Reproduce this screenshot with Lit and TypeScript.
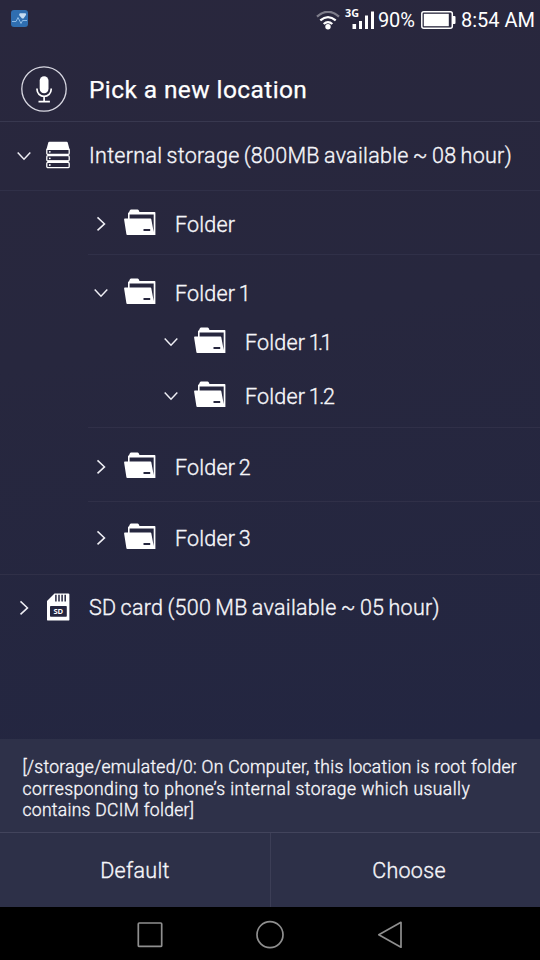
import { LitElement, html, css, svg } from "lit";
import { customElement, property } from "lit/decorators.js";

type Kind = "drive" | "folder" | "card";

const folderIcon = html`<svg width="32" height="26.500" viewBox="0 0 32 27" preserveAspectRatio="none">
  <path fill="#fff" fill-rule="evenodd" d="M4 9.700V4.400Q4 3.400 5 3.200L5.900 1.300Q6.200.5 7.100.5h6.400q.9 0 1.200.8l.8 1.800H30.600q.8 0 .8.8V26.500H3.300q-.8 0-.9-.8L.1 10.600q-.1-.9.8-.9zM5.600 5.500V9.700H26.400q.8 0 .9.7L29.700 23.500V5.500zM19.500 20.300v2.200h6.700v-2.200z"/>
</svg>`;

const driveIcon = html`<svg width="24" height="28" viewBox="0 0 24 28">
  <path fill="#fff" d="M3.300.8h17.400q.8 0 1 .8L23.700 9H.3L2.300 1.600q.2-.8 1-.8z"/>
  <g fill="none" stroke="#fff" stroke-width="1.300">
    <rect x=".8" y="8" width="22.400" height="5.400" rx="1.200"/>
    <rect x=".8" y="14.600" width="22.400" height="5.400" rx="1.200"/>
    <rect x=".8" y="21.300" width="22.400" height="5.400" rx="1.200"/>
  </g>
  <path stroke="#fff" stroke-width="1.400" d="M1.500 13.700h21M1.500 20.300h21"/>
  <g fill="#fff"><circle cx="3.800" cy="10.800" r=".9"/><circle cx="3.800" cy="17.300" r=".9"/><circle cx="3.800" cy="24" r=".9"/></g>
</svg>`;

const cardIcon = html`<svg width="24" height="28" viewBox="0 0 24 28">
  <path fill="#fff" d="M8.500.6h13.700q1.200 0 1.200 1.200v24.600q0 1.200-1.200 1.200H2.200Q1 27.600 1 26.400V8z"/>
  <path stroke="#25263f" stroke-width="1.500" d="M9.900 1.800v6.600M13 1.800v6.600M16.100 1.800v6.600M19.200 1.800v6.600"/>
  <rect x="4" y="13" width="16.800" height="10.800" rx=".8" fill="#25263f"/>
  <text x="12.300" y="21.200" text-anchor="middle" fill="#fff" font-family="Open Sans, sans-serif" font-weight="700" font-size="7.600">SD</text>
</svg>`;

const icons = { drive: driveIcon, folder: folderIcon, card: cardIcon };

@customElement("tree-row")
export class TreeRow extends LitElement {
  @property() kind: Kind = "folder";
  @property({ type: Boolean }) open = false;

  static styles = css`
    :host { display: flex; align-items: center; height: 40px; color: #f6f6fa; white-space: nowrap; }
    svg { display: block; flex: none; }
    .chev { width: 14px; }
    .icon { margin: 0 0 3px 16px; width: 51.500px; }
    .icon.root { margin: 0 0 2px 15px; width: 43px; }
    .label { font: 300 21.500px/26px Roboto, sans-serif; -webkit-text-stroke: 0.350px; letter-spacing: 0.200px; word-spacing: -2px; padding-top: 1px; }
    .label.root { letter-spacing: 0.290px; word-spacing: -1.400px; padding-top: 0; }
  `;

  render() {
    const root = this.kind === "folder" ? "" : "root";
    return html`
      <svg class="chev" width="14" height="16" viewBox="0 0 14 16" fill="none" stroke="#eeeef4" stroke-width="1.500">
        <path d=${this.open ? "M.7 4.500L7 11.200L13.300 4.500" : "M3.500 1.400L10.500 7.900L3.500 14.400"} />
      </svg>
      <span class="icon ${root}">${icons[this.kind]}</span>
      <span class="label ${root}"><slot></slot></span>
    `;
  }
}

@customElement("status-bar")
export class StatusBar extends LitElement {
  static styles = css`
    :host { display: flex; align-items: center; height: 40px; padding: 0 5px 0 11px; box-sizing: border-box; color: #fff; }
    svg { display: block; flex: none; }
    .app { margin-bottom: 3px; }
    .gap { flex: 1; }
    .wifi { margin-right: 5px; }
    .signal { margin-bottom: 3px; overflow: visible; }
    .text { font: 400 20px/24px Roboto, sans-serif; white-space: nowrap; }
    .pct { margin-left: 3px; width: 43px; letter-spacing: -0.100px; }
    .time { margin-left: 5px; }
  `;

  render() {
    const arcs = [
      { d: "M1 5.600Q12-4 23 5.600", o: 0.4 },
      { d: "M4.300 9.400Q12 2.900 19.700 9.400", o: 1 },
      { d: "M7.700 13Q12 9.300 16.300 13", o: 1 },
    ];
    return html`
      <svg class="app" width="17" height="17" viewBox="0 0 17 17">
        <rect width="17" height="17" rx="3" fill="#2f6eb0" />
        <path d="M8.800 3.300h5.500q1 0 .8 1.500L12.500 8.500H11L8 5z" fill="#c5dcf2" />
        <path d="M1 11.500h4l2-4 3 6 1.500-3H16" fill="none" stroke="#8cb9e4" />
      </svg>
      <span class="gap"></span>
      <svg class="wifi" width="24" height="19" viewBox="0 0 24 19">
        ${arcs.map((a) => svg`<path d=${a.d} fill="none" stroke="#fff" stroke-width="2.300" stroke-opacity=${a.o} />`)}
        <circle cx="12" cy="15.800" r="2.700" fill="#fff" />
      </svg>
      <svg class="signal" width="30" height="30" viewBox="0 -3 30 30">
        <text x="0" y="10" font-family="Noto Sans, sans-serif" font-weight="700" font-size="11.300" textLength="14" lengthAdjust="spacingAndGlyphs" fill="#fff">3G</text>
        <path fill="#fff" d="M7.500 17h3.600v5H7.500zM14 14h3v8h-3zM20 8.500h3V22h-3zM26 4.500h3V22h-3z" />
      </svg>
      <span class="text pct">90%</span>
      <svg width="35" height="18" viewBox="0 0 35 18">
        <rect x=".8" y=".8" width="30.500" height="16.400" rx="2" fill="none" stroke="#fff" stroke-width="1.500" />
        <rect x="2.800" y="2.800" width="25" height="12.400" fill="#fff" />
        <path d="M31.500 5h2q1 0 1 1v6q0 1-1 1h-2z" fill="#fff" />
      </svg>
      <span class="text time">8:54 AM</span>
    `;
  }
}

@customElement("app-root")
export class AppRoot extends LitElement {
  static styles = css`
    :host {
      display: flex; flex-direction: column; width: 540px; height: 960px; overflow: hidden;
      background: linear-gradient(170deg, #29273d 0%, #27273e 35%, #232641 78%);
      font-family: Roboto, sans-serif; color: #f6f6fa;
    }
    status-bar, .header, .tree, .info, .actions, .nav { flex: none; box-sizing: border-box; }
    svg { display: block; }
    .header { height: 82px; display: flex; align-items: center; padding: 16px 0 0 21px; border-bottom: 1px solid #38384f; }
    .title { font: 400 24.500px/30px Roboto, sans-serif; color: #fff; margin-left: 22px; padding-top: 2px; letter-spacing: 0.400px; -webkit-text-stroke: 0.250px; }
    .tree { height: 617px; display: flex; flex-direction: column; }
    .root { padding-left: 17px; height: 68px; }
    .root.last { height: 65px; }
    .root.first { border-bottom: 1px solid #303048; }
    .branch { margin-left: 88px; padding-left: 5.500px; border-bottom: 1px solid #303048; display: flex; flex-direction: column; box-sizing: border-box; }
    .branch.a { height: 64px; padding-top: 13px; }
    .branch.b { height: 173px; padding-top: 18px; }
    .branch.c { height: 74px; padding-top: 19px; }
    .branch.d { height: 73px; padding-top: 16px; margin-left: 0; padding-left: 93.500px; }
    .nested { padding: 9px 0 0 70px; display: flex; flex-direction: column; gap: 14px; }
    .n11 { letter-spacing: -2.600px; }
    .n12 { letter-spacing: -1.400px; }
    .info { height: 94px; padding: 18px 20px 0 22.500px; background: #2e3149; border-bottom: 1px solid #42445c; font-size: 17.500px; line-height: 21.500px; white-space: nowrap; }
    .line { display: block; font-weight: 300; -webkit-text-stroke: 0.350px; letter-spacing: 0.300px; }
    .line.wide { letter-spacing: 0.440px; }
    .actions { height: 74px; display: grid; grid-template-columns: 1fr 1fr; background: #2d3048; }
    .action { border: 0; background: none; padding: 2px 0 0; color: #f6f6fa; font: 300 21.500px/26px Roboto, sans-serif; letter-spacing: 0.300px; -webkit-text-stroke: 0.350px; }
    .action + .action { border-left: 1px solid #3c3e56; padding-left: 7px; }
    .nav { height: 53px; background: #000; display: flex; align-items: center; justify-content: center; gap: 90px; padding-top: 2px; }
  `;

  render() {
    return html`
      <status-bar></status-bar>
      <div class="header">
        <svg width="46" height="46" viewBox="0 0 46 46" fill="none" stroke="#fff">
          <circle cx="23" cy="23" r="22.200" stroke="#d8d8e2" stroke-width="1.300" />
          <rect x="18.700" y="10.200" width="8.800" height="17" rx="4.400" fill="#fff" stroke="none" />
          <path d="M16 22.500v.8a7.100 7.100 0 0 0 14.200 0v-.8M23.100 30.400v5M17.500 35.600h11.400" stroke-width="1.700" />
        </svg>
        <span class="title">Pick a new location</span>
      </div>
      <div class="tree">
        <tree-row class="root first" kind="drive" open>Internal storage (800MB available ~ 08 hour)</tree-row>
        <div class="branch a"><tree-row>Folder</tree-row></div>
        <div class="branch b">
          <tree-row open>Folder 1</tree-row>
          <div class="nested">
            <tree-row open>Folder <span class="n11">1.1</span></tree-row>
            <tree-row open>Folder <span class="n12">1.2</span></tree-row>
          </div>
        </div>
        <div class="branch c"><tree-row>Folder 2</tree-row></div>
        <div class="branch d"><tree-row>Folder 3</tree-row></div>
        <tree-row class="root last" kind="card">SD card (500 MB available ~ 05 hour)</tree-row>
      </div>
      <div class="info">
        <span class="line">[/storage/emulated/0: On Computer, this location is root folder</span>
        <span class="line wide">corresponding to phone’s internal storage which usually</span>
        <span class="line">contains DCIM folder]</span>
      </div>
      <div class="actions">
        <button class="action">Default</button>
        <button class="action">Choose</button>
      </div>
      <div class="nav">
        <svg width="30" height="30" viewBox="0 0 30 30" fill="none" stroke="#8f8f8f" stroke-width="1.700"><rect x="3.300" y="3" width="23.400" height="23.400" rx="1" /></svg>
        <svg width="30" height="30" viewBox="0 0 30 30" fill="none" stroke="#8f8f8f" stroke-width="1.700"><circle cx="15" cy="14.700" r="13" /></svg>
        <svg width="30" height="30" viewBox="0 0 30 30" fill="none" stroke="#8f8f8f" stroke-width="1.700" stroke-linejoin="round"><path d="M3.800 14.700L26 2.300V27.200z" /></svg>
      </div>
    `;
  }
}
